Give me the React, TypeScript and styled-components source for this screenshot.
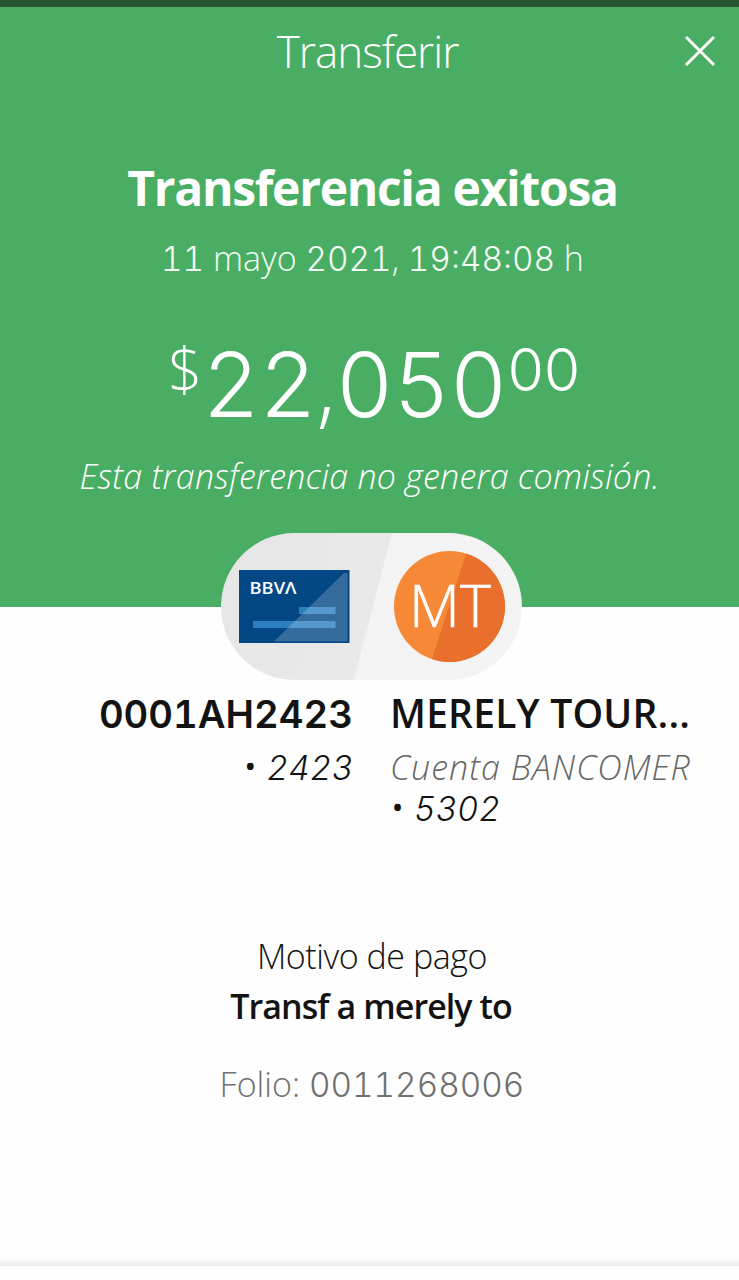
import React from "react";
import styled, { createGlobalStyle } from "styled-components";

const GlobalStyle = createGlobalStyle`
  * { box-sizing: border-box; }
  body {
    margin: 0;
    background: #fefefe;
    font-family: "Open Sans", "Noto Sans", sans-serif;
    color: #131313;
  }
`;

const Screen = styled.main`
  height: 1280px;
  display: flex;
  flex-direction: column;
  overflow: hidden;
  background: #fefefe;
`;

const StatusStrip = styled.div`
  flex: none;
  height: 7px;
  background: #28552f;
`;

const Hero = styled.section`
  flex: none;
  height: 600px;
  background: #49ae63;
  color: #fff;
  display: flex;
  flex-direction: column;
`;

const Header = styled.header`
  height: 87px;
  display: grid;
  grid-template-columns: 78px 1fr 78px;
  align-items: center;
`;

const Title = styled.h1`
  grid-column: 2;
  margin: 0 0 0 -4px;
  text-align: center;
  font-size: 44px;
  line-height: 84px;
  font-weight: 300;
  letter-spacing: -1px;
  color: #fff;
`;

const CloseButton = styled.button`
  grid-column: 3;
  justify-self: center;
  display: flex;
  padding: 0;
  border: 0;
  background: none;
  color: inherit;
`;

interface LineProps {
  $size: number;
  $line: number;
  $weight?: number;
  $spacing?: number;
  $italic?: boolean;
  $color?: string;
  $top?: number;
  $shift?: number;
}

const Line = styled.div<LineProps>`
  font-size: ${(p) => p.$size}px;
  line-height: ${(p) => p.$line}px;
  height: ${(p) => p.$line}px;
  font-weight: ${(p) => p.$weight ?? 300};
  letter-spacing: ${(p) => p.$spacing ?? 0}px;
  font-style: ${(p) => (p.$italic ? "italic" : "normal")};
  color: ${(p) => p.$color ?? "inherit"};
  margin-top: ${(p) => p.$top ?? 0}px;
  padding-left: ${(p) => p.$shift ?? 0}px;
  white-space: nowrap;
`;

const CenterLine = styled(Line)`
  text-align: center;
`;

/* Wide tabular figures, scaled to the cap height of the surrounding text. */
const Digits = styled.span<{ $spacing?: number }>`
  font-family: Inter, "Open Sans", sans-serif;
  font-size: 0.98em;
  line-height: 1;
  font-feature-settings: "tnum";
  letter-spacing: ${(p) => p.$spacing ?? 0}px;
`;

const Bullet = styled.span`
  display: inline-block;
  width: 24px;
  padding-left: 3px;
  font-size: 24px;
  line-height: 1;
  font-style: normal;
  font-weight: 700;
  vertical-align: 5px;
`;

const Amount = styled.div`
  display: flex;
  justify-content: center;
  align-items: flex-start;
  margin-top: 53px;
  height: 100px;
  padding-left: 8px;
`;

const Parties = styled.div`
  flex: none;
  align-self: center;
  position: relative;
  width: 301px;
  height: 147px;
  margin: -74px 0 0 4px;
  padding: 0 17px 0 18px;
  border-radius: 74px;
  display: flex;
  align-items: center;
  justify-content: space-between;
  background: linear-gradient(104.5deg, #e6e6e6 0, #e9e9e9 50.2%, #f3f3f3 50.6%, #f4f4f4 100%);
`;

const Accounts = styled.section`
  display: grid;
  grid-template-columns: 353px 1fr;
  column-gap: 37px;
  margin-top: 8px;
  height: 244px;
`;

const Account = styled.div<{ $align: "left" | "right" }>`
  display: flex;
  flex-direction: column;
  align-items: ${(p) => (p.$align === "right" ? "flex-end" : "flex-start")};
`;

const Details = styled.section`
  flex: 1;
`;

const BottomEdge = styled.div`
  flex: none;
  height: 7px;
  margin-bottom: 14px;
  background: linear-gradient(#fefefe, #e9e9e9);
`;

function CardIcon() {
  return (
    <svg width="111" height="74" viewBox="0 0 111 74" role="img" aria-label="BBVA">
      <rect width="110.5" height="73" fill="#044785" />
      <rect x="60" y="37" width="36.5" height="7" fill="#2b7fc1" />
      <rect x="14" y="51" width="82.5" height="7" fill="#2b7fc1" />
      <path d="M35 71.5 105 3h3.500v68.500z" fill="#fff" fillOpacity=".2" />
      <text x="10.500" y="23.500" fill="#fff" fontSize="17" fontWeight="600" textLength="47" lengthAdjust="spacingAndGlyphs">
        BBVΛ
      </text>
    </svg>
  );
}

function Avatar() {
  return (
    <svg width="111" height="111" viewBox="0 0 111 111">
      <defs>
        <clipPath id="disc">
          <circle cx="55.500" cy="55.500" r="55.500" />
        </clipPath>
      </defs>
      <g clipPath="url(#disc)">
        <rect width="111" height="111" fill="#f68938" />
        <path d="M73 0h38v111H37z" fill="#e9702c" />
      </g>
      <text x="56" y="76" fill="#fff" stroke="#fff" strokeWidth="0.6" fontSize="59" fontWeight="300" textAnchor="middle" textLength="82">
        MT
      </text>
    </svg>
  );
}

export default function App() {
  return (
    <Screen>
      <GlobalStyle />
      <StatusStrip />
      <Hero>
        <Header>
          <Title>Transferir</Title>
          <CloseButton aria-label="Cerrar">
            <svg width="32" height="32" viewBox="0 0 32 32" fill="none" stroke="#fff" strokeWidth="3">
              <path d="M2 2 30 30M30 2 2 30" />
            </svg>
          </CloseButton>
        </Header>
        <CenterLine $size={48} $line={60} $weight={700} $top={64} $shift={6} $spacing={-1.3}>Transferencia exitosa</CenterLine>
        <CenterLine $size={34} $line={44} $top={18} $shift={6} $color="#f4fcf5">
          <Digits>11</Digits> mayo <Digits>2021</Digits>, <Digits>19:48:08</Digits> h
        </CenterLine>
        <Amount>
          <Line $size={60} $line={73}>$</Line>
          <Line $size={91} $line={100} $top={-1}><Digits $spacing={-0.7}>22</Digits>,<Digits $spacing={-0.7}>050</Digits></Line>
          <Line $size={60} $line={73} $top={-1}><Digits $spacing={-2}>00</Digits></Line>
        </Amount>
        <CenterLine $size={34} $line={44} $top={21} $italic $spacing={0.25} $color="#fff">Esta transferencia no genera comisión.</CenterLine>
      </Hero>
      <Parties>
        <CardIcon />
        <Avatar />
      </Parties>
      <Accounts>
        <Account $align="right">
          <Line $size={39} $line={50} $weight={600}><Digits>0001AH2423</Digits></Line>
          <Line $size={34} $line={41} $top={9} $italic><Bullet>•</Bullet><Digits>2423</Digits></Line>
        </Account>
        <Account $align="left">
          <Line $size={39} $line={50} $weight={600} $spacing={0.2}>MERELY TOUR...</Line>
          <Line $size={34} $line={41} $top={9} $italic $spacing={1} $color="#666">Cuenta BANCOMER</Line>
          <Line $size={34} $line={41} $italic><Bullet>•</Bullet><Digits>5302</Digits></Line>
        </Account>
      </Accounts>
      <Details>
        <CenterLine $size={34} $line={50} $top={-1} $shift={5} $spacing={-0.45}>Motivo de pago</CenterLine>
        <CenterLine $size={34} $line={50} $weight={600} $shift={3} $spacing={-0.93}>Transf a merely to</CenterLine>
        <CenterLine $size={34} $line={50} $top={28} $shift={5} $color="#707070">
          Folio: <Digits>0011268006</Digits>
        </CenterLine>
      </Details>
      <BottomEdge />
    </Screen>
  );
}
